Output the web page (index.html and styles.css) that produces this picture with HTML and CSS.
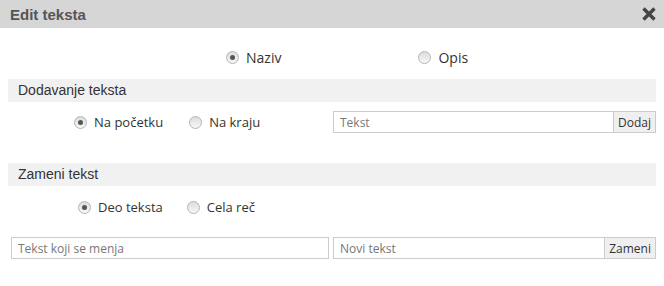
FILE: index.html
```html
<!DOCTYPE html>
<html>
<head>
<meta charset="utf-8">
<link rel="stylesheet" href="styles.css">
</head>
<body>
<div class="dialog">
  <div class="titlebar">
    <span class="title">Edit teksta</span>
    <span class="close">
      <svg width="16" height="16" viewBox="0 0 16 16"><path d="M2.5 2.5 L13.5 13.5 M13.5 2.5 L2.5 13.5" stroke="#444" stroke-width="3.4" stroke-linecap="butt"/></svg>
    </span>
  </div>
  <div class="content">
    <div class="row target">
      <label class="opt big"><span class="radio checked"></span>Naziv</label>
      <label class="opt big opis"><span class="radio"></span>Opis</label>
    </div>
    <div class="section">Dodavanje teksta</div>
    <div class="line add">
      <div class="opts opts-add">
        <label class="opt"><span class="radio checked"></span>Na početku</label>
        <label class="opt second-a"><span class="radio"></span>Na kraju</label>
      </div>
      <div class="group">
        <input class="field" placeholder="Tekst">
        <button class="btn">Dodaj</button>
      </div>
    </div>
    <div class="section replace">Zameni tekst</div>
    <div class="opts opts-rep">
      <label class="opt"><span class="radio checked"></span>Deo teksta</label>
      <label class="opt second-b"><span class="radio"></span>Cela reč</label>
    </div>
    <div class="line inputs">
      <input class="field old" placeholder="Tekst koji se menja">
      <div class="group">
        <input class="field" placeholder="Novi tekst">
        <button class="btn">Zameni</button>
      </div>
    </div>
  </div>
</div>
</body>
</html>
```

FILE: styles.css
```css
html, body {
  margin: 0;
  padding: 0;
  background: #fff;
}
.dialog {
  width: 664px;
  height: 286px;
  font-family: "Open Sans", sans-serif;
  color: #333;
}
.titlebar {
  height: 28px;
  background: #d6d6d6;
  display: flex;
  align-items: center;
  justify-content: space-between;
  padding: 0 7px 0 10px;
}
.title {
  font-family: "Liberation Sans", Arial, sans-serif;
  font-weight: bold;
  font-size: 15px;
  color: #555;
}
.close {
  display: flex;
  width: 16px;
  height: 16px;
}
.content {
  padding: 0 8px;
}
.row.target {
  display: flex;
  padding-left: 218px;
  align-items: center;
  padding-top: 7px;
  box-sizing: border-box;
  height: 51px;
}
.opt {
  display: flex;
  align-items: center;
  font-size: 13px;
  color: #333;
  white-space: nowrap;
}
.opt.big {
  font-size: 14px;
}
.opt.opis {
  margin-left: 137px;
}
.radio {
  width: 11px;
  height: 11px;
  border-radius: 50%;
  border: 1px solid #b5b5b5;
  background: linear-gradient(#dcdcdc, #f7f7f7);
  margin-right: 7px;
  position: relative;
  flex: none;
}
.radio.checked::after {
  content: "";
  position: absolute;
  left: 3px;
  top: 3px;
  width: 5px;
  height: 5px;
  border-radius: 50%;
  background: #555;
}
.section {
  height: 23px;
  background: #f1f1f1;
  font-family: "Liberation Sans", Arial, sans-serif;
  font-size: 14px;
  color: #333;
  padding-left: 10px;
  line-height: 23px;
}
.line {
  display: flex;
  align-items: center;
}
.line.add {
  height: 40px;
}
.opts {
  display: flex;
  align-items: center;
}
.opts-add {
  width: 325px;
  padding-left: 66px;
  box-sizing: border-box;
}
.second-a {
  margin-left: 26px;
}
.line.add + .section {
  margin-top: 21px;
}
.opts-rep {
  height: 42px;
  padding-left: 70px;
}
.second-b {
  margin-left: 24px;
}
.group {
  display: flex;
  width: 323px;
}
.field {
  flex: 1;
  height: 22px;
  box-sizing: border-box;
  border: 1px solid #ccc;
  font-family: "Open Sans", sans-serif;
  font-size: 12px;
  padding: 0 6px;
  margin: 0;
  outline: none;
  min-width: 0;
}
.field::placeholder {
  color: #777;
}
.btn {
  height: 22px;
  box-sizing: border-box;
  border: 1px solid #ccc;
  border-left: none;
  background: #efefef;
  font-family: "Open Sans", sans-serif;
  font-size: 12px;
  color: #333;
  padding: 0 4px;
  margin: 0;
}
.line.inputs {
  margin-top: 9px;
  padding-left: 3px;
}
.field.old {
  flex: none;
  width: 318px;
  margin-right: 4px;
}
```
